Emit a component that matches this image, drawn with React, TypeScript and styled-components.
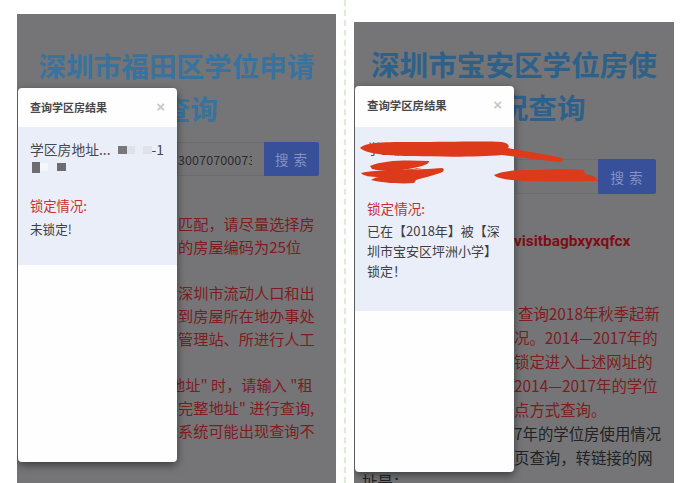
import React from "react";
import styled, { createGlobalStyle } from "styled-components";

const GlobalStyle = createGlobalStyle`
  html, body {
    margin: 0;
    padding: 0;
    background: #fff;
  }
  body {
    font-family: "Noto Sans CJK SC", "Roboto", "Liberation Sans", sans-serif;
  }
`;

const Page = styled.div`
  display: flex;
  width: 689px;
  height: 483px;
  overflow: hidden;
  background: #fff;
`;

const Shot = styled.div<{ $top: number; $left: number; $width: number }>`
  position: relative;
  flex: none;
  width: ${(p) => p.$width}px;
  height: ${(p) => 483 - p.$top}px;
  margin: ${(p) => p.$top}px 0 0 ${(p) => p.$left}px;
  overflow: hidden;
  background: #757577;
`;

const Divider = styled.div`
  flex: none;
  width: 0;
  height: 483px;
  margin-left: 8px;
  border-left: 2px dashed #d9efcf;
`;

const Title = styled.h1<{ $size: number; $color: string; $top: number }>`
  margin: 0;
  padding-top: ${(p) => p.$top}px;
  font-size: ${(p) => p.$size}px;
  line-height: 43px;
  font-weight: 700;
  text-align: center;
  white-space: nowrap;
  color: ${(p) => p.$color};
`;

const SearchRow = styled.div<{ $left: number; $top: number; $h: number; $w: number }>`
  display: flex;
  height: ${(p) => p.$h}px;
  margin: ${(p) => p.$top}px 0 0 ${(p) => p.$left}px;
  width: ${(p) => p.$w}px;
`;

const SearchInput = styled.div`
  flex: 1;
  min-width: 0;
  display: flex;
  align-items: center;
  padding-right: 12px;
  background: #747476;
  border: 1px solid #6c6c6e;
  border-right: 0;
`;

const InputValue = styled.div`
  flex: 1;
  overflow: hidden;
  font-size: 12.5px;
  letter-spacing: 0.1px;
  white-space: nowrap;
  color: #2c2c2e;
`;

const SearchButton = styled.div<{ $w: number }>`
  flex: none;
  width: ${(p) => p.$w}px;
  display: flex;
  align-items: center;
  justify-content: center;
  border-radius: 0 2px 2px 0;
  background: #38509a;
  font-size: 13.5px;
  letter-spacing: 1px;
  color: #8493bf;
`;

const Notes = styled.div<{ $left: number; $top: number; $size: number; $lh: number }>`
  margin: ${(p) => p.$top}px 0 0 ${(p) => p.$left}px;
  font-size: ${(p) => p.$size}px;
  line-height: ${(p) => p.$lh}px;
  white-space: nowrap;
`;

const NoteLine = styled.div<{ $indent?: number; $tone?: "red" | "bold" | "dark"; $gap?: number }>`
  margin-left: ${(p) => p.$indent ?? 0}px;
  margin-top: ${(p) => p.$gap ?? 0}px;
  color: ${(p) => (p.$tone === "dark" ? "#222224" : "#7e1c20")};
  font-weight: ${(p) => (p.$tone === "bold" ? 700 : 400)};
  ${(p) => (p.$tone === "bold" ? "font-family: Roboto, sans-serif; color: #7d0f14;" : "")}
`;

const Modal = styled.div<{ $top: number; $left: number; $height: number }>`
  position: absolute;
  top: ${(p) => p.$top}px;
  left: ${(p) => p.$left}px;
  width: 159px;
  height: ${(p) => p.$height}px;
  display: flex;
  flex-direction: column;
  overflow: hidden;
  border-radius: 4px;
  background: #fdfefd;
  box-shadow: 0 3px 9px rgba(0, 0, 0, 0.5);
`;

const ModalHeader = styled.div<{ $h: number; $pb: number }>`
  flex: none;
  height: ${(p) => p.$h}px;
  box-sizing: border-box;
  display: flex;
  align-items: center;
  justify-content: space-between;
  padding: 0 12px ${(p) => p.$pb}px;
`;

const ModalTitle = styled.div<{ $size: number }>`
  font-size: ${(p) => p.$size}px;
  font-weight: 700;
  color: #48484a;
`;

const Close = styled.div`
  font-family: "Liberation Sans", sans-serif;
  font-size: 15px;
  font-weight: 700;
  line-height: 1;
  color: #c6c7c9;
`;

const ModalBody = styled.div<{ $h: number; $pt: number }>`
  flex: none;
  height: ${(p) => p.$h}px;
  box-sizing: border-box;
  padding: ${(p) => p.$pt}px 12px 0;
  background: #e9eef8;
`;

const Address = styled.div`
  position: relative;
  height: 48px;
  font-size: 13.8px;
  line-height: 22px;
  white-space: nowrap;
  color: #48484c;
`;

const AddressTail = styled.span`
  position: absolute;
  right: 1px;
  top: 0;
`;

const Blot = styled.span<{ $x: number; $y: number; $w: number; $h: number; $c: string }>`
  position: absolute;
  left: ${(p) => p.$x}px;
  top: ${(p) => p.$y}px;
  width: ${(p) => p.$w}px;
  height: ${(p) => p.$h}px;
  background: ${(p) => p.$c};
  filter: blur(0.6px);
`;

const StatusLabel = styled.div<{ $size: number; $mt: number }>`
  margin-top: ${(p) => p.$mt}px;
  font-size: ${(p) => p.$size}px;
  line-height: 20px;
  color: #c8302f;
`;

const StatusText = styled.div<{ $size: number; $mt: number }>`
  margin-top: ${(p) => p.$mt}px;
  font-size: ${(p) => p.$size}px;
  line-height: 20px;
  color: #3f3f43;
`;

const Scribble = styled.svg`
  position: absolute;
  left: 0;
  top: 0;
  width: 320px;
  height: 461px;
  pointer-events: none;
`;

export default function App() {
  return (
    <Page>
      <GlobalStyle />
      <Shot $top={14} $left={17} $width={319}>
        <Title $size={27.6} $color="#37739e" $top={30}>
          深圳市福田区学位申请
          <br />
          房查询
        </Title>
        <SearchRow $left={160} $top={12} $h={34} $w={142}>
          <SearchInput>
            <InputValue>30070700073</InputValue>
          </SearchInput>
          <SearchButton $w={55}>搜 索</SearchButton>
        </SearchRow>
        <Notes $left={161} $top={36} $size={15.2} $lh={23}>
          <NoteLine>匹配，请尽量选择房</NoteLine>
          <NoteLine>的房屋编码为25位</NoteLine>
          <NoteLine $gap={23}>深圳市流动人口和出</NoteLine>
          <NoteLine>到房屋所在地办事处</NoteLine>
          <NoteLine>管理站、所进行人工</NoteLine>
          <NoteLine $gap={23} $indent={-8}>
            地址" 时，请输入 "租
          </NoteLine>
          <NoteLine>完整地址" 进行查询,</NoteLine>
          <NoteLine>系统可能出现查询不</NoteLine>
        </Notes>
        <Modal $top={74} $left={1} $height={374}>
          <ModalHeader $h={39} $pb={2}>
            <ModalTitle $size={11}>查询学区房结果</ModalTitle>
            <Close>×</Close>
          </ModalHeader>
          <ModalBody $h={138} $pt={11}>
            <Address>
              学区房地址...
              <AddressTail>-1</AddressTail>
              <Blot $x={88} $y={8} $w={9} $h={8} $c="#77777c" />
              <Blot $x={97} $y={8} $w={8} $h={8} $c="#dfe2e8" />
              <Blot $x={113} $y={8} $w={9} $h={8} $c="#dfe2e8" />
              <Blot $x={2} $y={24} $w={8} $h={11} $c="#6c6c72" />
              <Blot $x={10} $y={25} $w={8} $h={8} $c="#f4f6fb" />
              <Blot $x={27} $y={25} $w={9} $h={8} $c="#6c6c72" />
            </Address>
            <StatusLabel $size={13.3} $mt={10}>
              锁定情况:
            </StatusLabel>
            <StatusText $size={12.6} $mt={3}>
              未锁定!
            </StatusText>
          </ModalBody>
        </Modal>
      </Shot>
      <Divider />
      <Shot $top={22} $left={8} $width={320}>
        <Title $size={28.6} $color="#2d618a" $top={20}>
          深圳市宝安区学位房使
          <br />
          用情况查询
        </Title>
        <SearchRow $left={162} $top={31} $h={35} $w={140}>
          <SearchInput />
          <SearchButton $w={58}>搜 索</SearchButton>
        </SearchRow>
        <Notes $left={160} $top={35} $size={15.4} $lh={24}>
          <NoteLine $tone="bold">visitbagbxyxqfcx</NoteLine>
          <NoteLine $gap={48} $indent={4}>
            查询2018年秋季起新
          </NoteLine>
          <NoteLine>况。2014—2017年的</NoteLine>
          <NoteLine>锁定进入上述网址的</NoteLine>
          <NoteLine>2014—2017年的学位</NoteLine>
          <NoteLine>点方式查询。</NoteLine>
          <NoteLine $tone="dark">7年的学位房使用情况</NoteLine>
          <NoteLine $tone="dark">页查询，转链接的网</NoteLine>
          <NoteLine $tone="dark" $indent={-152}>
            址是：
          </NoteLine>
        </Notes>
        <Modal $top={64} $left={1} $height={386}>
          <ModalHeader $h={41} $pb={4}>
            <ModalTitle $size={11.4}>查询学区房结果</ModalTitle>
            <Close>×</Close>
          </ModalHeader>
          <ModalBody $h={184} $pt={10}>
            <Address>学区房地址</Address>
            <StatusLabel $size={13.6} $mt={13}>
              锁定情况:
            </StatusLabel>
            <StatusText $size={13} $mt={3}>
              已在【2018年】被【深
              <br />
              圳市宝安区坪洲小学】
              <br />
              锁定！
            </StatusText>
          </ModalBody>
        </Modal>
        <Scribble viewBox="0 0 320 461">
          <g fill="#dc3a1b">
            <path d="M6 126 C12 120 30 120 61 120 C90 120 130 119 148 120 C154 121 156 124 154 126 C170 129 195 133 208 136 C210 138 208 140 205 140 C185 138 165 135 148 133 C125 135 90 135 61 134 C35 134 12 132 6 126 Z" />
            <path d="M16 144 C30 138 52 138 75 139 C76 143 62 146 48 148 C58 147 64 146 68 146 C50 150 30 150 18 147 Z" />
            <path d="M7 151 C25 147 50 149 88 146 C91 147 90 150 86 151 C78 154 68 156 62 158 L60 161 C48 162 28 161 17 158 C20 156 23 155 25 155 C17 155 9 154 7 151 Z" />
            <path d="M140 153 C148 149 160 148 180 148 C200 147 218 147 230 148 L231 152 C237 153 243 155 244 159 C225 159 195 160 170 159 C155 158 144 157 140 153 Z" />
          </g>
        </Scribble>
      </Shot>
    </Page>
  );
}
